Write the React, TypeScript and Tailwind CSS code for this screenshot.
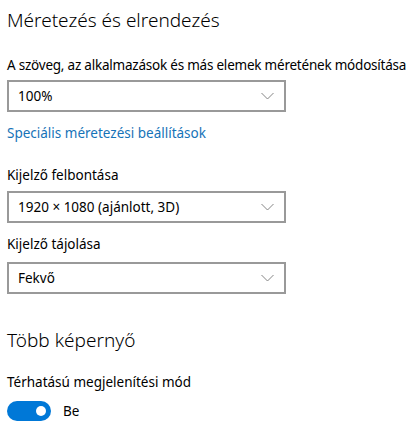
interface SelectProps {
  value: string
  className?: string
}

const Chevron = () => (
  <svg width="13" height="8" viewBox="0 0 13 8" fill="none" className="mr-[1px]">
    <polyline points="0.5,1 6.5,7 12.5,1" stroke="#858585" strokeWidth="1" />
  </svg>
)

const Select = ({ value, className = '' }: SelectProps) => (
  <div
    className={`flex h-[32px] w-[279px] items-center justify-between border-2 border-[#999999] bg-white pl-[9px] pr-[9px] ${className}`}
  >
    <span className="text-[13.5px] leading-[20px] text-black">{value}</span>
    <Chevron />
  </div>
)

const Label = ({ children, className = '' }: { children: React.ReactNode; className?: string }) => (
  <p className={`whitespace-nowrap text-[13.5px] leading-[20px] text-black ${className}`}>{children}</p>
)

export default function App() {
  return (
    <div
      className="min-h-[435px] w-[414px] bg-white px-[7px] pt-[6px]"
      style={{ fontFamily: '"Noto Sans", "Open Sans", sans-serif' }}
    >
      <h2 className="text-[19px] font-light leading-[28px] text-black">Méretezés és elrendezés</h2>

      <Label className="mt-[21px] tracking-[-0.22px]">
        A szöveg, az alkalmazások és más elemek méretének módosítása
      </Label>
      <Select value="100%" className="mt-[5px]" />

      <a className="mt-[11px] block text-[13.5px] leading-[20px] text-[#1673b8]">
        Speciális méretezési beállítások
      </a>

      <Label className="mt-[22px]">Kijelző felbontása</Label>
      <Select value="1920 × 1080 (ajánlott, 3D)" className="mt-[6px]" />

      <Label className="mt-[11px]">Kijelző tájolása</Label>
      <Select value="Fekvő" className="mt-[8px]" />

      <h2 className="mt-[32px] text-[19px] font-light leading-[28px] text-black">Több képernyő</h2>

      <Label className="mt-[18px]">Térhatású megjelenítési mód</Label>
      <div className="mt-[9px] flex items-center gap-[12px]">
        <div className="flex h-[20px] w-[44px] items-center justify-end rounded-full bg-[#0078d7] pr-[5px]">
          <span className="h-[10px] w-[10px] rounded-full bg-white" />
        </div>
        <span className="text-[13.5px] leading-[20px] text-black">Be</span>
      </div>
    </div>
  )
}
